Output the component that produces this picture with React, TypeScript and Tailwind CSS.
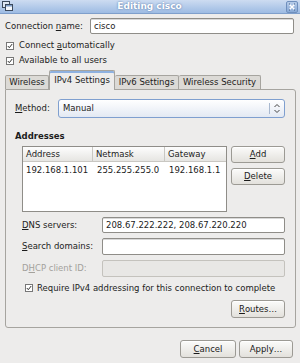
import React from "react";

function U({ children }: { children: React.ReactNode }) {
  return <span className="underline underline-offset-[1px] decoration-[1px]">{children}</span>;
}

function Check() {
  return (
    <svg width="8" height="8" viewBox="0 0 8 8" className="shrink-0">
      <rect x="0.5" y="0.5" width="7" height="7" fill="#ffffff" stroke="#777777" />
      <path d="M1.8 4 L3.3 5.7 L6.2 2" fill="none" stroke="#333" strokeWidth="1" />
    </svg>
  );
}

function Btn({ children, w, h = 17 }: { children: React.ReactNode; w: number; h?: number }) {
  return (
    <div
      className="flex items-center justify-center rounded-[3px] border border-[#9c9a94] bg-gradient-to-b from-[#fbfbfa] to-[#e3e1dc] text-[#1a1a1a] shadow-[inset_0_1px_0_#ffffff]"
      style={{ width: w, height: h }}
    >
      {children}
    </div>
  );
}

function Input({ value, disabled }: { value?: string; disabled?: boolean }) {
  return (
    <div
      className={
        "flex-1 h-full rounded-[2px] border flex items-center pl-[3px] " +
        (disabled ? "border-[#c4c2bd] bg-[#e8e7e5]" : "border-[#8f8d88] bg-white shadow-[inset_0_1px_0_#d8d8d8]")
      }
    >
      {value}
    </div>
  );
}

export default function App() {
  return (
    <div className="w-[300px] h-[363px] bg-[#edeceb] font-['DejaVu_Sans',sans-serif] text-[8.5px] leading-none text-[#1c1c1c] flex flex-col overflow-hidden">
      {/* title bar */}
      <div className="h-[14px] shrink-0 bg-gradient-to-b from-[#cddcf1] to-[#9dbbe3] border-b border-[#7f9fcb] flex items-center relative">
        <svg width="11" height="11" viewBox="0 0 11 11" className="ml-[2px]">
          <rect x="0.5" y="0.5" width="7" height="6" fill="#dfe8f4" stroke="#3c4a5c" />
          <rect x="3.5" y="3.5" width="7" height="6" fill="#f4f7fb" stroke="#3c4a5c" />
          <rect x="4" y="4" width="6" height="1.5" fill="#7d9cc6" />
        </svg>
        <div className="flex-1 text-center font-bold text-white text-[9px] [text-shadow:0_0_2px_#4a6d9e]">
          Editing cisco
        </div>
        <div className="mr-[2px] w-[12px] h-[12px] rounded-[2px] border border-[#6f8fbd] bg-gradient-to-b from-[#b6cbe8] to-[#88a9d6] flex items-center justify-center">
          <svg width="8" height="8" viewBox="0 0 8 8">
            <path d="M1.5 1.5 L6.5 6.5 M6.5 1.5 L1.5 6.5" stroke="#ffffff" strokeWidth="1.4" />
            <path d="M1 1 L2 1 M6 1 L7 1 M1 7 L2 7 M6 7 L7 7" stroke="#3d5a85" strokeWidth="1" />
          </svg>
        </div>
      </div>

      <div className="pl-[5px] pr-[6px] flex flex-col">
        {/* connection name */}
        <div className="mt-[4px] h-[16px] flex items-center">
          <div className="w-[85px]">
            Connection <U>n</U>ame:
          </div>
          <Input value="cisco" />
        </div>
        {/* checkboxes */}
        <div className="mt-[4px] h-[15px] flex items-center gap-[5px] pl-[1px]">
          <Check />
          <span>
            Connect <U>a</U>utomatically
          </span>
        </div>
        <div className="h-[15px] flex items-center gap-[5px] pl-[1px]">
          <Check />
          <span>Available to all users</span>
        </div>

        {/* tabs */}
        <div className="h-[22px] flex items-end relative z-10">
          <div className="w-[44px] h-[14px] border border-b-0 border-[#a6a49f] rounded-t-[2px] bg-[#dcdad6] flex items-center justify-center mb-[1px]">
            Wireless
          </div>
          <div className="w-[66px] h-[20px] border border-b-0 border-[#a6a49f] rounded-t-[2px] bg-[#edeceb] flex items-center justify-center shadow-[inset_0_2px_0_#8eb1e0]">
            IPv4 Settings
          </div>
          <div className="w-[64px] h-[14px] border border-b-0 border-l-0 border-[#a6a49f] rounded-t-[2px] bg-[#dcdad6] flex items-center justify-center mb-[1px]">
            IPv6 Settings
          </div>
          <div className="w-[82px] h-[14px] border border-b-0 border-l-0 border-[#a6a49f] rounded-t-[2px] bg-[#dcdad6] flex items-center justify-center mb-[1px]">
            Wireless Security
          </div>
        </div>

        {/* panel */}
        <div className="-mt-[1px] h-[239px] w-[291px] border border-[#a6a49f] rounded-b-[3px] rounded-tr-[3px] bg-[#edeceb] flex flex-col pl-[9px] pr-[10px]">
          <div className="mt-[9px] h-[19px] flex items-center">
            <div className="w-[43px]">
              <U>M</U>ethod:
            </div>
            <div className="flex-1 h-full rounded-[3px] border border-[#7f9fcf] bg-gradient-to-b from-[#ffffff] to-[#e3e9f3] flex items-center">
              <span className="pl-[4px] flex-1">Manual</span>
              <div className="w-[1px] h-[11px] bg-[#a8b8cf]" />
              <svg width="14" height="11" viewBox="0 0 14 11">
                <path d="M4.5 4 L7 1.5 L9.5 4" fill="none" stroke="#444" strokeWidth="1" />
                <path d="M4.5 7 L7 9.5 L9.5 7" fill="none" stroke="#444" strokeWidth="1" />
              </svg>
            </div>
          </div>

          <div className="mt-[12px] h-[12px] flex items-center font-bold">Addresses</div>

          <div className="mt-[4px] flex">
            <div className="ml-[7px] w-[205px] h-[66px] border border-[#8f8d88] bg-white flex flex-col">
              <div className="h-[15px] flex bg-gradient-to-b from-[#fdfdfd] to-[#e6e5e2] border-b border-[#c9c7c2]">
                <div className="w-[70px] pl-[3px] flex items-center border-r border-[#c9c7c2]">Address</div>
                <div className="w-[72px] pl-[3px] flex items-center border-r border-[#c9c7c2]">Netmask</div>
                <div className="flex-1 pl-[3px] flex items-center">Gateway</div>
              </div>
              <div className="h-[17px] flex items-center">
                <div className="w-[71px] pl-[3px]">192.168.1.101</div>
                <div className="w-[72px] pl-[3px]">255.255.255.0</div>
                <div className="flex-1 pl-[3px]">192.168.1.1</div>
              </div>
            </div>
            <div className="ml-[4px] flex flex-col gap-[5px]">
              <Btn w={54}>
                <U>A</U>dd
              </Btn>
              <Btn w={54}>
                <U>D</U>elete
              </Btn>
            </div>
          </div>

          <div className="mt-[5px] h-[16px] flex items-center pl-[7px]">
            <div className="w-[80px]">
              <U>D</U>NS servers:
            </div>
            <Input value="208.67.222.222, 208.67.220.220" />
          </div>
          <div className="mt-[5px] h-[17px] flex items-center pl-[7px]">
            <div className="w-[80px]">
              <U>S</U>earch domains:
            </div>
            <Input />
          </div>
          <div className="mt-[5px] h-[17px] flex items-center pl-[7px]">
            <div className="w-[80px] text-[#a3a19c]">
              D<U>H</U>CP client ID:
            </div>
            <Input disabled />
          </div>
          <div className="mt-[5px] h-[12px] flex items-center pl-[10px] gap-[4px]">
            <Check />
            <span>Require IPv4 addressing for this connection to complete</span>
          </div>
          <div className="mt-[6px] flex justify-end">
            <Btn w={54} h={18}>
              <U>R</U>outes…
            </Btn>
          </div>
        </div>

        {/* bottom buttons */}
        <div className="mt-[12px] flex justify-end gap-[3px] pr-[1px]">
          <Btn w={56} h={18}>
            <U>C</U>ancel
          </Btn>
          <Btn w={54} h={18}>
            Apply…
          </Btn>
        </div>
      </div>
    </div>
  );
}
